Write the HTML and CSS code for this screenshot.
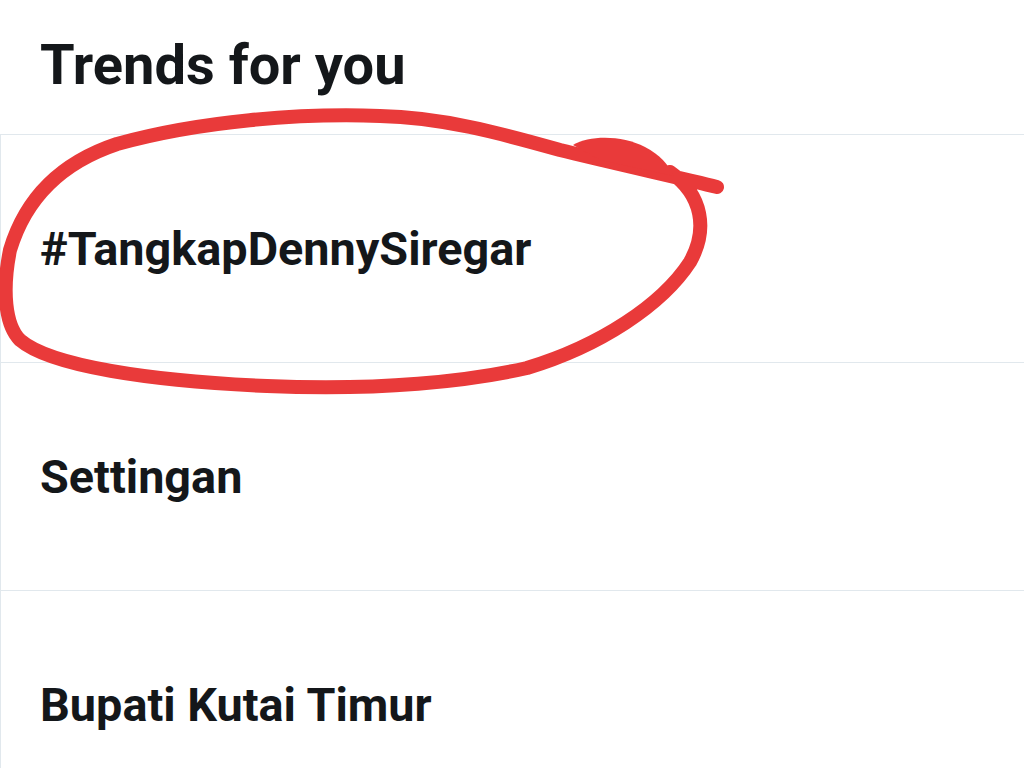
FILE: index.html
```html
<!DOCTYPE html>
<html lang="en">
<head>
    <meta charset="UTF-8">
    <meta name="viewport" content="width=device-width, initial-scale=1.0">
    <title>Trends for you</title>
    <link rel="stylesheet" href="styles.css">
</head>
<body>
    <div class="panel">
        <div class="panel-header">
            <h2>Trends for you</h2>
        </div>

        <div class="trend-list">
            <div class="trend-item">#TangkapDennySiregar</div>
            <div class="trend-item">Settingan</div>
            <div class="trend-item">Bupati Kutai Timur</div>
        </div>

        <!-- red marker scribble drawn over the first trend -->
        <svg class="scribble" width="1024" height="768" viewBox="0 0 1024 768">
            <path d="M717,187 C680,178 600,160 560,150 C500,133 440,117 380,116 C300,113 200,121 117,144 C60,163 25,200 10,250 C2,290 5,325 20,340 C50,366 150,381 267,386 C380,391 470,381 527,368 C600,346 662,305 690,262 C708,230 703,195 670,172"
                  fill="none" stroke="#e93a3a" stroke-width="14" stroke-linecap="round" stroke-linejoin="round"/>
            <path d="M573,145 C590,135 622,135 645,147 C660,155 668,164 674,176 L600,160 Z" fill="#e93a3a"/>
        </svg>
    </div>
</body>
</html>
```

FILE: styles.css
```css
body {
    margin: 0;
    background-color: #ffffff;
    font-family: Roboto, 'Liberation Sans', Arial, sans-serif;
    color: #14171a;
    overflow: hidden;
}
.panel {
    position: relative;
    width: 1024px;
    height: 768px;
    overflow: hidden;
}
.panel-header {
    height: 134px;
    box-sizing: border-box;
    padding: 0 0 3px 40px;
    display: flex;
    align-items: center;
}
.panel-header h2 {
    margin: 0;
    font-size: 56px;
    font-weight: 700;
    line-height: 1.2;
}
.trend-list {
    border-left: 1px solid #e1e8ed;
    width: 1100px;
}
.trend-item {
    height: 227px;
    border-top: 1px solid #e1e8ed;
    padding-left: 39px;
    display: flex;
    align-items: center;
    font-size: 46.8px;
    font-weight: 700;
}
.scribble {
    position: absolute;
    top: 0;
    left: 0;
    pointer-events: none;
}
```
